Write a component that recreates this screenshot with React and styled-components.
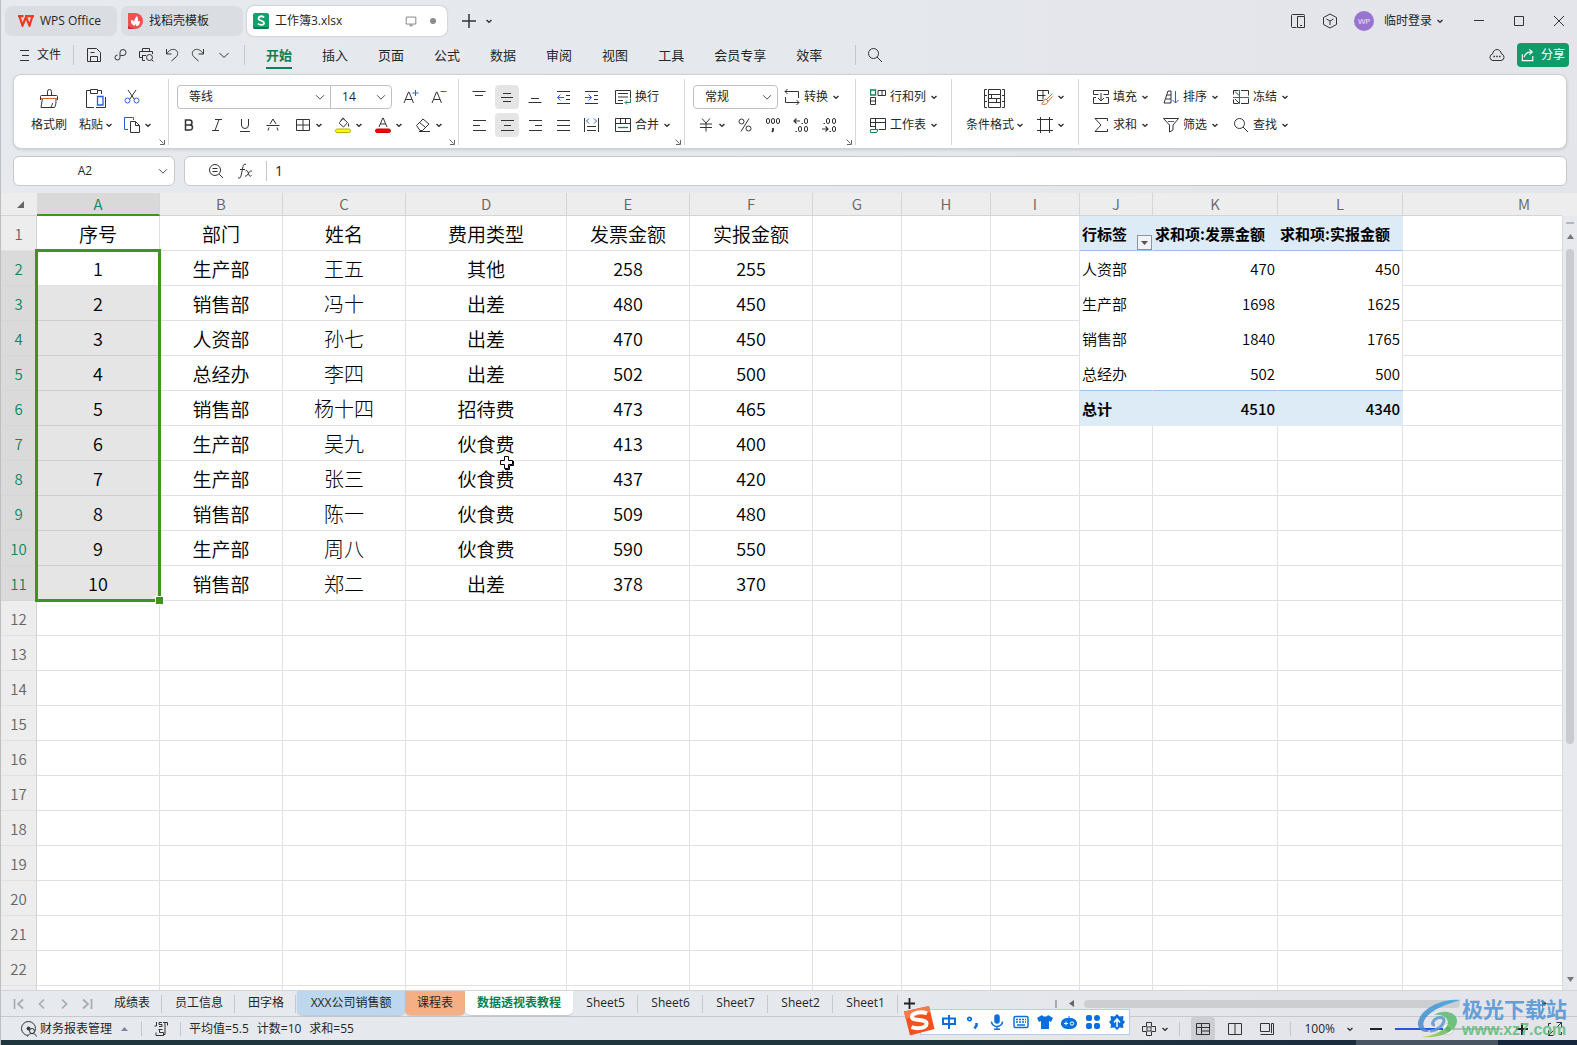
import { useState } from "react";
import styled, { createGlobalStyle, css } from "styled-components";

const ink = "#333";
const blue = "#2b5ce0";
const green = "#0f8558";
const orange = "#d9642c";

/* ---------- icons ---------- */

const paths = {
    burger: <path d="M2 3.5h9M4 8.5h7M2 13.5h9"/>,
    save: <path d="M1.5 1.5h9l4 4v9h-13zM4.5 14v-4.5h7V14M4.5 5.5h4"/>,
    link: <path d="M8.5 8.500h2.500a3 3 0 1 0-3-3v5a2.500 2.500 0 1 1-2.500-2.500"/>,
    print: <><path d="M4.5 4V1.5h7V4M4 10.5H1.500v-6h13V7M4.500 8.500H8M4.500 8v5.500H7"/><circle cx="11.500" cy="10.500" r="3"/><path d="M13.500 12.500l2 2"/></>,
    undo: <path d="M2.500 2v5h5M3 6.500C5 3 8 2 10.500 2.500c3.500 1 4 4.500 2 7L7.500 14"/>,
    redo: <path d="M13.500 2v5h-5M13 6.500C11 3 8 2 5.500 2.500c-3.500 1-4 4.500-2 7L8.500 14"/>,
    wide: <path d="M3.500 6l4.500 4.500L12.500 6"/>,
    search: <><circle cx="6.500" cy="6.500" r="5"/><path d="M10 10l5 5"/></>,
    panel: <path d="M6.500 14.500h-4a1 1 0 0 1-1-1v-11a1 1 0 0 1 1-1h11a1 1 0 0 1 1 1V3M7.500 3.500h7v11h-7zM10 12.500h2"/>,
    cube: <path d="M8 1l6.500 3.500v7L8 15l-6.500-3.500v-7zM4.500 6L8 8l3.500-2M8 8v4"/>,
    cloud: <><path d="M4 13.500a3.300 3.300 0 0 1-.5-6.500C4 4 6 2.500 8 2.500S12 4 12.500 7a3.300 3.300 0 0 1-.5 6.500z"/><path d="M4.500 9.500h1.500M7.200 9.500h1.500M10 9.500h1.500" strokeWidth="1.500"/></>,
    share: <path d="M1.500 7v7.500h12V9M3.500 10.500c1-4 4-6 9-6M9.500 1.500l3.500 3-3.500 3" stroke="#fff" strokeWidth="1.300"/>,
    min: <path d="M3 7.500h10"/>,
    max: <path d="M3.500 3.500h9v9h-9z"/>,
    close: <path d="M3 3l10 10M13 3L3 13"/>,
    plus: <path d="M8 1v14M1 8h14" strokeWidth="1.500"/>,
    screen: <path d="M2.500 3.500h11v8h-11zM6 13.500h4M8 11.500v2" stroke="#777"/>,
    zoomText: <><circle cx="7" cy="7" r="5.500"/><path d="M11 11l4 4M4.500 5.500h5M4.500 8.500h5"/></>,
    fx: <path d="M9 1.500C7.500.5 6.500 1.500 6 3.500L4 13c-.5 2-1.500 2.500-3 1.800M3 6.500h5M8.500 8c1-1 2-.5 2.500 1l1 3c.5 1.500 1.500 1.500 2.500.5M15 8c-2-.5-3 1.500-4 3s-1.500 2.500-3 2"/>,
    cut: <><path d="M4 1l6.500 9.500M12 1L5.500 10.500"/><g stroke={blue}><circle cx="3.500" cy="11.500" r="2.500"/><circle cx="12.500" cy="11.500" r="2.500"/></g></>,
    copy: <><path d="M4 12.500H.5v-12h9V3" stroke={blue}/><path d="M6.500 4.500h5l4 4v7h-9zM11.500 4.500v4h4"/></>,
    growFont: <><path d="M1 14L5.500 3h.5l4.500 11M2.500 10.500h6.500"/><path d="M12.500 1v6M9.500 4h6" stroke={blue}/></>,
    shrinkFont: <><path d="M1 14L5.500 3h.5l4.500 11M2.500 10.500h6.500"/><path d="M9.500 2.500h6" stroke={blue}/></>,
    bold: <path d="M4.500 3h4a2.300 2.300 0 0 1 0 5h-4zM4.500 8H9a2.500 2.500 0 0 1 0 5H4.500z" strokeWidth="1.500"/>,
    italic: <path d="M6 2.500h7M3 13.500h7M10 2.500l-4 11"/>,
    underline: <path d="M4.500 2v6a3.500 3.500 0 0 0 7 0V2M3 14.500h10"/>,
    strike: <path d="M1.500 8.500h13M5 7l3-5 3 5M4 10.500l-1 3M12 10.500l1 3"/>,
    borders: <path d="M1.500 2.500h13v11h-13zM8 2.500v11M1.500 8h13"/>,
    fill: <><path d="M4.500 5.500L8 1.500l4.500 4-4 4.500-4-3.500zM6 3.500C7 .5 9 .5 9.500 3M13.500 6.500v3"/><rect x=".5" y="12" width="15" height="3.500" rx="1.700" fill="#ffff00" stroke="#b5b000"/></>,
    fontColor: <><path d="M4 10L7.800 1h.4L12 10M5.500 7h5"/><rect x=".5" y="12" width="15" height="3.500" rx="1.700" fill="#ff0000" stroke="#c00000"/></>,
    eraser: <path d="M1.500 8.500l6.500-6.500 6 5-6.500 6.500H5zM4.500 5.500l6 5M4 14.500h11"/>,
    alignTop: <path d="M1.500 2.500h13M4 6.500h8"/>,
    alignMid: <path d="M4 4.500h8M2 8.500h12M4 12.500h8"/>,
    alignBot: <path d="M4 9.500h8M1.500 13.500h13"/>,
    outdent: <><path d="M2 2.500h13M2 14.500h13M11 6.500h4M11 10.500h4"/><path d="M2.500 8.500H9M5.500 5.500l-3 3 3 3" stroke={blue}/></>,
    indent: <><path d="M2 2.500h13M2 14.500h13M11 6.500h4M11 10.500h4"/><path d="M2 8.500h6.500M5.500 5.500l3 3-3 3" stroke={blue}/></>,
    left: <path d="M2 3.500h13M2 8.500h7M2 13.500h13"/>,
    center: <path d="M2 3.500h13M5 8.500h7M2 13.500h13"/>,
    right: <path d="M2 3.500h13M8 8.500h7M2 13.500h13"/>,
    justify: <path d="M2 3.500h13M2 8.500h13M2 13.500h13"/>,
    spread: <><path d="M1.500 1v14M15.500 1v14M4 9.500h9M4 13.500h9"/><path d="M6 1.500L3.500 4 6 6.500M11 1.500L13.500 4 11 6.500" stroke={blue}/></>,
    wrap: <><path d="M8 14.500H.5v-13h15V9M3 4.500h10M3 8h10M3 11.500h5"/><path d="M15.500 9.500v4h-5M12 11.500l-2 2 2 2" stroke={green}/></>,
    merge: <><path d="M.5 1.500h15v13H.5zM.5 6.500h15M5.500 1.500v5M10.500 1.500v5"/><path d="M3 10.500h10" stroke={green} strokeWidth="1.300"/></>,
    convert: <path d="M1 2.500h13.500V9M1.500 8v5.500H15M3.500 0L1 2.500 3.500 5M12.500 11l2.500 2.500L12.500 16"/>,
    yen: <path d="M4 1.500L8 6l4-4.500M2 7h12M2 10.500h12M8 6v8.500"/>,
    percent: <><circle cx="4.500" cy="4.500" r="2.500"/><circle cx="11.500" cy="11.500" r="2.500"/><path d="M12 1.500l-8 13"/></>,
    comma: <><rect x="1.500" y="1.500" width="3" height="5" rx="1.500"/><rect x="6.500" y="1.500" width="3" height="5" rx="1.500"/><rect x="11.500" y="1.500" width="3" height="5" rx="1.500"/><path d="M8 11v2.500l-1 1.500" strokeWidth="1.800"/></>,
    decMore: <><path d="M1 4h6M3.500 1.500L1 4l2.500 2.500M8.500 6.500h1.500M2.500 14.500H4" strokeWidth="1.200"/><rect x="11.500" y="1.500" width="3" height="5" rx="1.500"/><rect x="5.500" y="9.500" width="3" height="5" rx="1.500"/><rect x="11.500" y="9.500" width="3" height="5" rx="1.500"/></>,
    decLess: <><path d="M1 12h6M4.500 9.500L7 12l-2.500 2.500M2.500 6.500H4M8.500 14.500h1.500" strokeWidth="1.200"/><rect x="5.500" y="1.500" width="3" height="5" rx="1.500"/><rect x="11.500" y="1.500" width="3" height="5" rx="1.500"/><rect x="11.500" y="9.500" width="3" height="5" rx="1.500"/></>,
    rowsCols: <><path d="M8 1.500h7.500v5H8zM12 1.500v5M.5 8.500h5v7h-5zM.5 12h5"/><path d="M.5 1h5v5h-5z" stroke={green} strokeWidth="1.300"/></>,
    sheet: <><path d="M.5 10V1.500h15v11H9M.5 5.500h15M5.500 1.500v11M.5 9.500h5"/><path d="M.5 12.500H8l-1.500 3h-6z" stroke={green}/></>,
    paint: <><path d="M6 11.500H.5V1.500h11V5M.5 6.500h8M6 1.500v9"/><path d="M15.500 4.500l-6 6M15.500 7.500l-4.500 5M9 10c-3 .5-2 4-4.500 5 3 1 6.500 0 6.500-3z" stroke={orange}/></>,
    crop: <path d="M3.500 0v16M12.500 0v16M0 2.500h16M0 13.500h16"/>,
    fillDown: <path d="M5.500 5.500h-5v-4h15v4h-5M3 8.500H.5v6h15v-6H13M8 4v8M5 9l3 3 3-3"/>,
    sort: <><path d="M1 14L5 2h3v12zM4 6h4M3 10h5"/><path d="M12.500 2v12M9.500 11l3 3 3-3" stroke={blue}/></>,
    freeze: <><path d="M5.500 1.500h-5v4M.5 10.500v4h5M8 1.500h7.500v5M15.500 9.500v5H8M2 2.500l4 4M2 10l4 4"/><path d="M0 8.500h16M6.500 1v14" stroke={green}/></>,
    sum: <path d="M14.500 4V1.500H2l6 6.500-6 6.500h12.500V12"/>,
    filter: <><path d="M.5 1.500h15L10 8v5l-3.500 2V8z"/><path d="M5 4.500h6" stroke={green}/></>,
    js: <><path d="M3.500 1v4H1.500M9 1.500H6v2h3v2H6"/><path d="M10 1.500h4.500v3M12 1.500v12h-2M5.500 8.500h4M3 11.500v3h7.500v-3h-4v-3"/></>,
    macro: <><circle cx="7.500" cy="7.500" r="7"/><circle cx="7.500" cy="7.500" r="1.500" fill={ink}/><circle cx="11" cy="10" r="2.500" fill="#e6eaee"/><path d="M6.500 15.500c1-4 8-4 9 0" fill="#e6eaee"/></>,
    target: <path d="M5.500 5.500V1.500h5v4M5.500 10.500v4h5v-4M5.500 5.500h-4v5h4M10.500 5.500h4v5h-4M6 6h4v4H6z"/>,
    viewGrid: <path d="M1.500 2.500h13v11h-13zM1.500 6.500h13M6.500 2.500v11M6.500 10h8"/>,
    viewBook: <path d="M1.500 2.500h13v11h-13zM8 2.500v11"/>,
    viewPage: <path d="M1.500 2.500h9v8h-9zM12.500 2.500h2v11h-13M12.500 2.500v9.500"/>,
    full: <path d="M9.500 1.500h5v5M14.500 1.500L10 6M6.500 14.500h-5v-5M1.500 14.500L6 10M1.500 5V2.500H4M14.500 11v2.500H12"/>,
    first: <path d="M2.500 3v10M11 3.500L6 8l5 4.500" stroke="#a7abb0" strokeWidth="1.700"/>,
    prev: <path d="M10 3.500L5.500 8l4.500 4.500" stroke="#a7abb0" strokeWidth="1.700"/>,
    next: <path d="M6 3.500L10.500 8 6 12.500" stroke="#a7abb0" strokeWidth="1.700"/>,
    last: <path d="M13.500 3v10M5 3.500L10 8l-5 4.500" stroke="#a7abb0" strokeWidth="1.700"/>,
};

const big = {
    brush: <path d="M8.500 7V3.500a2 2 0 0 1 4 0V7M1.500 12V8.500a1 1 0 0 1 1-1h15a1 1 0 0 1 1 1V12M3.500 10L2 19.500h13.500c1.500-2 1.500-5 1.500-9M12 19c1-1.500 1.500-3 1.500-4"/>,
    paste: <><path d="M9 19.500H1.500v-17H5M13 2.500h3.500V6M5.500 1.500h7v4h-7zM11 19.500h9.500V9"/><path d="M12.500 8.500h5.500v8.500h-5.500z" stroke={blue} strokeWidth="1.300"/></>,
    cond: <path d="M4.500 1.500h12v18h-12zM4.500 6.500h12M4.500 10.500h12M4.500 14.500h12M7.500 6.500v4M12.500 10.500v4M3 1.500H.500v18H3M18 1.500h2.500v18H18M.5 7.500h2.500M.5 13.500h2.500M18 7.500h2.500M18 13.500h2.500"/>,
};

function Icon({ name, size = 16 }) {
    return (
        <svg width={size} height={size} viewBox="0 0 16 16" fill="none" stroke={ink} aria-hidden="true">
            {paths[name]}
        </svg>
    );
}

function BigIcon({ name }) {
    return (
        <svg width="21" height="21" viewBox="0 0 21 21" fill="none" stroke={ink} aria-hidden="true">
            {big[name]}
            {name === "brush" && <path d="M2 10.500h16" stroke={orange}/>}
        </svg>
    );
}

function Caret() {
    return (
        <svg width="6" height="6" viewBox="0 0 6 6" fill="none" stroke={ink} strokeWidth="1.400" aria-hidden="true">
            <path d="M.5 2L3 4.300 5.500 2"/>
        </svg>
    );
}

/* ---------- data ---------- */

const menus = ["插入", "页面", "公式", "数据", "审阅", "视图", "工具", "会员专享", "效率"];
const quick = [["save", "保存"], ["link", "输出"], ["print", "打印预览"], ["undo", "撤销"], ["redo", "恢复"], ["wide", "更多"]];
const columns = [
    ["A", 123], ["B", 123], ["C", 123], ["D", 161], ["E", 123], ["F", 123], ["G", 89],
    ["H", 89], ["I", 89], ["J", 73], ["K", 125], ["L", 125], ["M", null],
];
const header = ["序号", "部门", "姓名", "费用类型", "发票金额", "实报金额"];
const records = [
    [1, "生产部", "王五", "其他", 258, 255],
    [2, "销售部", "冯十", "出差", 480, 450],
    [3, "人资部", "孙七", "出差", 470, 450],
    [4, "总经办", "李四", "出差", 502, 500],
    [5, "销售部", "杨十四", "招待费", 473, 465],
    [6, "生产部", "吴九", "伙食费", 413, 400],
    [7, "生产部", "张三", "伙食费", 437, 420],
    [8, "销售部", "陈一", "伙食费", 509, 480],
    [9, "生产部", "周八", "伙食费", 590, 550],
    [10, "销售部", "郑二", "出差", 378, 370],
];
const rows = [header, ...records];
const rowCount = 22;
const pivot = [
    ["行标签", "求和项:发票金额", "求和项:实报金额"],
    ["人资部", 470, 450],
    ["生产部", 1698, 1625],
    ["销售部", 1840, 1765],
    ["总经办", 502, 500],
    ["总计", 4510, 4340],
];
const sheets = [
    { name: "成绩表" }, { name: "员工信息" }, { name: "田字格" },
    { name: "XXX公司销售额", color: "#bdd7ee", width: 108 }, { name: "课程表", color: "#f4b084" },
    { name: "数据透视表教程" },
    { name: "Sheet5", width: 65 }, { name: "Sheet6", width: 65 }, { name: "Sheet7", width: 65 },
    { name: "Sheet2", width: 65 }, { name: "Sheet1", width: 65 },
];

/* ---------- page ---------- */

export default function App() {
    const [sheet, setSheet] = useState("数据透视表教程");

    return (
        <>
            <GlobalStyle/>
            <Window>
                <TitleBar/>
                <MenuBar/>
                <Ribbon/>
                <FormulaRow/>
                <Grid/>
                <SheetBar sheet={sheet} setSheet={setSheet}/>
                <StatusBar/>
                <Desktop/>
                <InputMethod/>
                <Watermark/>
            </Window>
        </>
    );
}

function TitleBar() {
    return (
        <Title>
            <FileTab $width={112}>
                <svg width="16" height="12" viewBox="0 0 16 12" fill="none" stroke="#f5391f" strokeWidth="2.200">
                    <path d="M0 1.200h5.500M1.500 1.500l3 9L8 2l3.500 8.500 3-9.500M7 1.200h9"/>
                </svg>
                WPS Office
            </FileTab>
            <FileTab $width={122}>
                <svg width="16" height="16" viewBox="0 0 16 16">
                    <path d="M1 0h7a8 8 0 0 1 0 16H1z" fill="#f0504f"/>
                    <path d="M1 13l7 3H1z" fill="#c93237"/>
                    <path d="M8 13C3 11 4 8 4 7c3 0 4 3 4 6zM8 12C6 8 8 5 10 3c2 4 1 7-2 9zM9 13c0-4 2-5 4-5 0 3-1 5-4 5z" fill="#fff"/>
                </svg>
                找稻壳模板
            </FileTab>
            <FileTab $width={200} $active>
                <svg width="16" height="16" viewBox="0 0 16 16">
                    <rect width="16" height="16" rx="2" fill="#10a26c"/>
                    <path d="M0 14h16a2 2 0 0 1-2 2H2a2 2 0 0 1-2-2z" fill="#0b7a50"/>
                    <path d="M11 4.500C9.500 2.500 5.500 3 5.500 5.500c0 3 5.500 1.500 5.500 4.500 0 2.500-4.500 2.500-6 .5" fill="none" stroke="#fff" strokeWidth="1.800"/>
                </svg>
                <span>工作簿3.xlsx</span>
                <TabState><Icon name="screen" size={14}/><Dot/></TabState>
            </FileTab>
            <Row $gap={9}>
                <IconButton aria-label="新建"><Icon name="plus"/></IconButton>
                <Caret/>
            </Row>
            <Spacer/>
            <Account>
                <IconButton aria-label="侧栏"><Icon name="panel"/></IconButton>
                <IconButton aria-label="应用"><Icon name="cube"/></IconButton>
                <Login><Avatar>WP</Avatar>临时登录<Caret/></Login>
            </Account>
            <Row $gap={24}>
                <IconButton aria-label="最小化"><Icon name="min"/></IconButton>
                <IconButton aria-label="最大化"><Icon name="max"/></IconButton>
                <IconButton aria-label="关闭"><Icon name="close"/></IconButton>
            </Row>
        </Title>
    );
}

function MenuBar() {
    return (
        <Menu>
            <FileMenu><Icon name="burger"/>文件</FileMenu>
            <Divider/>
            <QuickTools>
                {quick.map(([name, label]) => (
                    <IconButton key={name} aria-label={label}><Icon name={name}/></IconButton>
                ))}
            </QuickTools>
            <Divider/>
            <MenuList>
                <MenuItem $active>开始</MenuItem>
                {menus.map((m) => <MenuItem key={m}>{m}</MenuItem>)}
            </MenuList>
            <Divider/>
            <Find aria-label="搜索"><Icon name="search"/></Find>
            <Spacer/>
            <IconButton aria-label="云端"><Icon name="cloud"/></IconButton>
            <ShareButton><Icon name="share" size={14}/>分享</ShareButton>
        </Menu>
    );
}

function Drop({ icon, children }) {
    return <DropTool aria-label={icon}><Icon name={icon}/>{children && <span>{children}</span>}<Caret/></DropTool>;
}

function Tools({ names, on }) {
    return (
        <Row $gap={4}>
            {names.map((n) => <Tool key={n} $on={n === on} aria-label={n}><Icon name={n}/></Tool>)}
        </Row>
    );
}

function Pick({ label, value, width, side }) {
    return (
        <PickBox $width={width} $side={side}>
            <select aria-label={label} defaultValue={value}><option>{value}</option></select>
            <Icon name="wide" size={14}/>
        </PickBox>
    );
}

function Launcher() {
    return (
        <Corner aria-label="更多设置">
            <svg width="6" height="6" viewBox="0 0 6 6" fill="none" stroke="#666"><path d="M.5.5l4 4M5.500 1v4.500H1"/></svg>
        </Corner>
    );
}

function Ribbon() {
    return (
        <RibbonPanel>
            <Group $left={17} $right={17} $gap={12}>
                <BigTool><BigIcon name="brush"/><span>格式刷</span></BigTool>
                <BigTool><BigIcon name="paste"/><span>粘贴<Caret/></span></BigTool>
                <Block>
                    <Row $h={24}><IconButton aria-label="剪切"><Icon name="cut"/></IconButton></Row>
                    <Drop icon="copy"/>
                </Block>
                <Launcher/>
            </Group>
            <Group $left={8} $right={7}>
                <Block>
                    <Row $gap={7}>
                        <Row>
                            <Pick label="字体" value="等线" width={153} side="left"/>
                            <Pick label="字号" value="14" width={62} side="right"/>
                        </Row>
                        <Tools names={["growFont", "shrinkFont"]}/>
                    </Row>
                    <Row $gap={10}>
                        <Tools names={["bold", "italic", "underline", "strike"]}/>
                        <Row $gap={13}>
                            <Drop icon="borders"/><Drop icon="fill"/><Drop icon="fontColor"/><Drop icon="eraser"/>
                        </Row>
                    </Row>
                </Block>
                <Launcher/>
            </Group>
            <Group $left={8} $right={14} $gap={12}>
                <Block>
                    <Tools names={["alignTop", "alignMid", "alignBot", "outdent", "indent"]} on="alignMid"/>
                    <Tools names={["left", "center", "right", "justify", "spread"]} on="center"/>
                </Block>
                <Block>
                    <DropTool><Icon name="wrap"/><span>换行</span></DropTool>
                    <Drop icon="merge">合并</Drop>
                </Block>
                <Launcher/>
            </Group>
            <Group $left={8} $right={14}>
                <Block>
                    <Row $gap={6}>
                        <Pick label="数字格式" value="常规" width={85}/>
                        <Drop icon="convert">转换</Drop>
                    </Row>
                    <Row $gap={8} $indent={5}>
                        <Drop icon="yen"/>
                        <Tools names={["percent", "comma", "decMore", "decLess"]}/>
                    </Row>
                </Block>
                <Launcher/>
            </Group>
            <Group $left={14} $right={14}>
                <Block>
                    <Drop icon="rowsCols">行和列</Drop>
                    <Drop icon="sheet">工作表</Drop>
                </Block>
            </Group>
            <Group $left={14} $right={14} $gap={14}>
                <BigTool><BigIcon name="cond"/><span>条件格式<Caret/></span></BigTool>
                <Block>
                    <Drop icon="paint"/>
                    <Drop icon="crop"/>
                </Block>
            </Group>
            <Group $left={14} $right={14} $last>
                <Block>
                    <Row $gap={15}>
                        <Drop icon="fillDown">填充</Drop><Drop icon="sort">排序</Drop><Drop icon="freeze">冻结</Drop>
                    </Row>
                    <Row $gap={15}>
                        <Drop icon="sum">求和</Drop><Drop icon="filter">筛选</Drop><Drop icon="search">查找</Drop>
                    </Row>
                </Block>
            </Group>
        </RibbonPanel>
    );
}

function FormulaRow() {
    return (
        <Formula>
            <NameBox>
                <input aria-label="名称框" defaultValue="A2"/>
                <Icon name="wide" size={14}/>
            </NameBox>
            <FormulaBox>
                <Icon name="zoomText"/>
                <Icon name="fx"/>
                <Divider/>
                <input aria-label="编辑栏" defaultValue="1"/>
            </FormulaBox>
        </Formula>
    );
}

function cellFor(r, c) {
    const value = rows[r]?.[c];
    if (c < 6) return <Cell key={c} $name={r > 0 && c === 2} $num={typeof value === "number"} $picked={c === 0 && r > 1 && r < 11}>{value}</Cell>;
    if (c > 8 && c < 12 && r < 6) {
        const p = pivot[r][c - 9];
        return (
            <PivotCell key={c} $band={r === 0 || r === 5} $rule={r === 0 || r === 4} $edge={c === 11} $num={typeof p === "number"}>
                {p}
                {r === 0 && c === 9 && (
                    <FilterButton aria-label="筛选行标签">
                        <svg width="7" height="4" viewBox="0 0 7 4"><path d="M0 0h7L3.500 4z" fill="#555"/></svg>
                    </FilterButton>
                )}
            </PivotCell>
        );
    }
    return <Cell key={c}/>;
}

function Grid() {
    return (
        <GridArea>
            <Viewport>
                <Sheet>
                    <colgroup>
                        <Col $w={36}/>
                        {columns.map(([name, w]) => <Col key={name} $w={w}/>)}
                    </colgroup>
                    <thead>
                        <tr>
                            <ColHead aria-label="全选">
                                <AllCorner width="7" height="7" viewBox="0 0 7 7"><path d="M7 0v7H0z" fill="#666"/></AllCorner>
                            </ColHead>
                            {columns.map(([name]) => <ColHead key={name} $on={name === "A"}>{name}</ColHead>)}
                        </tr>
                    </thead>
                    <tbody>
                        {Array.from({ length: rowCount + 1 }, (_, r) => (
                            <tr key={r}>
                                <RowHead $on={r > 0 && r < 11}>{r < rowCount && r + 1}</RowHead>
                                {columns.map((_c, c) => cellFor(r, c))}
                            </tr>
                        ))}
                    </tbody>
                </Sheet>
                <Selection/>
                <Pointer width="16" height="16" viewBox="0 0 16 16">
                    <path d="M5.500 1.500h4v4h4v4h-4v4h-4v-4h-4v-4h4z" fill="#fff" stroke="#000"/>
                    <path d="M6 14.500h4.500V10.500M11 10.500h3.500V6" fill="none" stroke="#000"/>
                </Pointer>
            </Viewport>
            <VScroll>
                <Dash/>
                <svg width="7" height="5" viewBox="0 0 7 5"><path d="M0 5h7L3.500 0z" fill="#777"/></svg>
                <VTrack><VThumb/></VTrack>
                <svg width="7" height="5" viewBox="0 0 7 5"><path d="M0 0h7L3.500 5z" fill="#777"/></svg>
            </VScroll>
        </GridArea>
    );
}

function SheetBar({ sheet, setSheet }) {
    return (
        <Sheets>
            <SheetNav>
                {["first", "prev", "next", "last"].map((n) => (
                    <IconButton key={n} aria-label={n}><Icon name={n}/></IconButton>
                ))}
            </SheetNav>
            {sheets.map((s) => (
                <SheetTab key={s.name} $color={s.color} $width={s.width} $active={s.name === sheet} onClick={() => setSheet(s.name)}>{s.name}</SheetTab>
            ))}
            <AddSheet aria-label="新建工作表">
                <svg width="11" height="11" viewBox="0 0 11 11" stroke="#222" strokeWidth="1.800"><path d="M5.500 0v11M0 5.500h11"/></svg>
            </AddSheet>
            <Spacer/>
            <HScroll>
                <Splitter/>
                <svg width="5" height="7" viewBox="0 0 5 7"><path d="M5 0v7L0 3.500z" fill="#666"/></svg>
                <HTrack><HThumb/></HTrack>
                <svg width="5" height="7" viewBox="0 0 5 7"><path d="M0 0v7l5-3.500z" fill="#444"/></svg>
            </HScroll>
        </Sheets>
    );
}

function StatusBar() {
    return (
        <Status>
            <Macro><Icon name="macro"/>财务报表管理
                <svg width="7" height="4" viewBox="0 0 7 4"><path d="M0 4h7L3.500 0z" fill="#7b86a5"/></svg>
            </Macro>
            <Divider $short/>
            <IconButton aria-label="JS 宏"><Icon name="js"/></IconButton>
            <Divider $short/>
            <Stats><span>平均值=5.5</span><span>计数=10</span><span>求和=55</span></Stats>
            <Spacer/>
            <DropTool aria-label="阅读模式"><Icon name="target"/><Caret/></DropTool>
            <Divider $short/>
            <Row $gap={8}>
                <Tool $on aria-label="普通视图"><Icon name="viewGrid"/></Tool>
                <Tool aria-label="分页预览"><Icon name="viewBook"/></Tool>
                <Tool aria-label="页面布局"><Icon name="viewPage"/></Tool>
            </Row>
            <Divider $short/>
            <ZoomLevel>100%<Caret/></ZoomLevel>
            <Zoom>
                <IconButton aria-label="缩小"><svg width="12" height="12" viewBox="0 0 12 12" stroke="#222" strokeWidth="2"><path d="M0 6h12"/></svg></IconButton>
                <input type="range" aria-label="缩放" defaultValue="49"/>
                <IconButton aria-label="放大"><svg width="12" height="12" viewBox="0 0 12 12" stroke="#222" strokeWidth="2"><path d="M0 6h12M6 0v12"/></svg></IconButton>
            </Zoom>
            <IconButton aria-label="全屏"><Icon name="full"/></IconButton>
        </Status>
    );
}

function InputMethod() {
    const b = "#0b6fdb";
    return (
        <Ime>
            <ImeLogo width="32" height="32" viewBox="0 0 32 32">
                <path d="M1 6.500L26 1l5.500 23L7 30.500z" fill="#f4511e"/>
                <path d="M1 6.500L26 1l1.500 6L2.500 14z" fill="#fa7a4a"/>
                <path d="M24 8.500c-6-2.500-15-1-15 3.500 0 4.500 14.500 1.500 14.500 6.500 0 4.500-9 6-15 3.500" fill="none" stroke="#fff" strokeWidth="4"/>
            </ImeLogo>
            <svg width="16" height="16" viewBox="0 0 16 16" fill="none" stroke={b} strokeWidth="2"><path d="M2 4.500h12v5.500H2zM8 1v14"/></svg>
            <svg width="16" height="16" viewBox="0 0 16 16" fill="none" stroke={b} strokeWidth="1.700"><circle cx="4.500" cy="5" r="1.700"/><path d="M11.500 9v2.500l-2 3" strokeWidth="2.500"/></svg>
            <svg width="16" height="16" viewBox="0 0 16 16" fill="none" stroke={b} strokeWidth="1.500"><rect x="6" y="1" width="4" height="8" rx="2" fill={b}/><path d="M2.500 7.500a5.500 5 0 0 0 11 0M8 12.500V15M5 15.200h6"/></svg>
            <svg width="16" height="16" viewBox="0 0 16 16" fill="none" stroke={b} strokeWidth="1.500"><rect x="1" y="2.500" width="14" height="11" rx="1.500"/><path d="M3 5.500h10M3 8h10" strokeDasharray="2 1"/><path d="M4 11h8"/></svg>
            <svg width="16" height="16" viewBox="0 0 16 16" fill={b}><path d="M5 1c1 2 5 2 6 0l5 3-2 4-2-1v8H4V7L2 8 0 4z"/></svg>
            <svg width="16" height="16" viewBox="0 0 16 16" fill={b}><path d="M7.500 2h1v2C13 4 16 6 16 9.500S13 15 8 15 0 13 0 9.500 3 4 7.500 4z"/><path d="M3 9.500h4M5 7.500v4" stroke="#fff"/><circle cx="11" cy="9.500" r="1.700" fill="none" stroke="#fff"/></svg>
            <svg width="16" height="16" viewBox="0 0 16 16" fill={b}><rect x="1" y="1" width="6" height="6" rx="2"/><rect x="9" y="1" width="6" height="6" rx="3"/><rect x="1" y="9" width="6" height="6" rx="2"/><rect x="9" y="9" width="6" height="6" rx="2"/></svg>
            <svg width="16" height="16" viewBox="0 0 16 16" fill={b}><path d="M8 0l2.500 2.500 4-.5-.5 4L16 8l-2 2.500.5 3.500-4-.5L8 16l-2.500-2.500-4 .5.5-3.500L0 8l2-2-.5-4 4 .5z"/><path d="M8 13V6M5 8.500L8 5l3 3.500" stroke="#fff" strokeWidth="1.500" fill="none"/></svg>
        </Ime>
    );
}

function Watermark() {
    return (
        <Mark>
            <svg width="46" height="42" viewBox="0 0 46 42">
                <defs>
                    <linearGradient id="swirlTop" x1="0" y1="1" x2="1" y2="0"><stop offset="0" stopColor="#4a86c8"/><stop offset="1" stopColor="#3aa8e0"/></linearGradient>
                    <linearGradient id="swirlLow" x1="0" y1="1" x2="1" y2="0"><stop offset="0" stopColor="#c4cf45"/><stop offset=".5" stopColor="#5cba62"/><stop offset="1" stopColor="#58bd7a"/></linearGradient>
                </defs>
                <path d="M45 2C27 0 5 10 2 24c-1 7 5 12 12 9-5-1-8-5-6-10C12 13 30 6 45 2z" fill="url(#swirlTop)"/>
                <path d="M18 17c9-6 22-3 23 5 1 10-15 19-36 17 12-1 26-7 27-14 0-6-7-9-14-8z" fill="url(#swirlLow)"/>
                <path d="M14 33c7 0 14-6 14-11-1-4-9-3-11 2-1 2 0 3 2 3" fill="none" stroke="#5a9bd0" strokeWidth="3"/>
            </svg>
            <div><strong>极光下载站</strong><em>www.xz7.com</em></div>
        </Mark>
    );
}

/* ---------- styles ---------- */

const GlobalStyle = createGlobalStyle`
    * {
        box-sizing: border-box;
    }
    body {
        margin: 0;
        font: 12px/16px "Open Sans", "Noto Sans CJK SC", sans-serif;
        color: #262626;
    }
    button, input, select {
        font: inherit;
        color: inherit;
        background: none;
        border: 0;
        padding: 0;
        outline: 0;
    }
    svg {
        display: block;
        flex: none;
    }
`

const Window = styled.div`
    position: relative;
    display: flex;
    flex-direction: column;
    height: 100vh;
    overflow: hidden;
    border-left: 1px solid #bfbfc1;
    background: linear-gradient(90deg, #e6eaee, #e5e9ed 50%, #e4e5ea 80%);
`

const Spacer = styled.div`
    flex: 1;
`

const Row = styled.div`
    display: flex;
    align-items: center;
    gap: ${(p) => p.$gap || 0}px;
    padding-left: ${(p) => p.$indent || 0}px;
    height: ${(p) => (p.$h ? p.$h + "px" : "auto")};
`

const IconButton = styled.button`
    display: flex;
    align-items: center;
    justify-content: center;
`

const Divider = styled.span`
    width: 1px;
    height: ${(p) => (p.$short ? 14 : 20)}px;
    background: #c3c7cb;
`

const Title = styled.header`
    display: flex;
    align-items: center;
    height: 40px;
    padding: 2px 10px 0 4px;
    gap: 4px;
`

const FileTab = styled.button`
    display: flex;
    align-items: center;
    gap: 6px;
    width: ${(p) => p.$width}px;
    height: 30px;
    padding: 0 11px 0 6px;
    border-radius: 7px;
    background: ${(p) => (p.$active ? "#fff" : "#dadde1")};
    box-shadow: ${(p) => (p.$active ? "0 0 2px rgba(0, 0, 0, .3)" : "none")};
    margin-right: ${(p) => (p.$active ? 10 : 0)}px;
    &:first-child {
        padding-left: 13px;
    }
`

const TabState = styled.span`
    display: flex;
    align-items: center;
    gap: 12px;
    margin-left: auto;
`

const Dot = styled.i`
    width: 6px;
    height: 6px;
    border-radius: 50%;
    background: #8c8c8c;
`

const Account = styled.div`
    display: flex;
    align-items: center;
    gap: 16px;
    margin-right: 24px;
`

const Login = styled.button`
    display: flex;
    align-items: center;
    gap: 5px;
`

const Avatar = styled.span`
    width: 20px;
    margin-right: 5px;
    border-radius: 50%;
    background: #9873d0;
    color: #eee;
    font-size: 8px;
    line-height: 20px;
`

const Menu = styled.nav`
    display: flex;
    align-items: center;
    height: 34px;
    padding: 0 8px 4px 17px;
`

const FileMenu = styled.button`
    display: flex;
    align-items: center;
    gap: 3px;
    margin-right: 12px;
`

const QuickTools = styled.div`
    display: flex;
    gap: 10px;
    padding: 0 12px;
`

const MenuList = styled.div`
    display: flex;
    gap: 30px;
    align-self: stretch;
    padding: 0 33px 0 21px;
`

const MenuItem = styled.button`
    height: 29px;
    padding-top: 2px;
    font-size: 13px;
    border-bottom: 2px solid ${(p) => (p.$active ? "#0b7f55" : "transparent")};
    color: ${(p) => (p.$active ? "#0b7f55" : "inherit")};
    font-weight: ${(p) => (p.$active ? 700 : 400)};
`

const Find = styled(IconButton)`
    margin-left: 11px;
`

const ShareButton = styled.button`
    display: flex;
    align-items: center;
    justify-content: center;
    gap: 6px;
    width: 52px;
    height: 24px;
    margin-left: 12px;
    border-radius: 4px;
    background: #109b68;
    color: #fff;
`

const RibbonPanel = styled.section`
    display: flex;
    height: 75px;
    padding: 4px 0 3px;
    margin: 0 10px 0 12px;
    border: 1px solid #cdd0d4;
    border-radius: 8px;
    background: #fff;
    box-shadow: 0 1px 3px rgba(0, 0, 0, .12);
`

const Group = styled.div`
    position: relative;
    display: flex;
    align-items: flex-start;
    gap: ${(p) => p.$gap || 0}px;
    padding: 6px ${(p) => p.$right}px 0 ${(p) => p.$left}px;
    border-right: ${(p) => (p.$last ? 0 : 1)}px solid #d6d8da;
`

const Block = styled.div`
    display: flex;
    flex-direction: column;
    gap: 4px;
`

const Tool = styled.button`
    display: flex;
    align-items: center;
    justify-content: center;
    width: 24px;
    height: 24px;
    border-radius: 4px;
    background: ${(p) => (p.$on ? "rgba(0, 0, 0, .1)" : "none")};
`

const DropTool = styled.button`
    display: flex;
    align-items: center;
    gap: 5px;
    height: 24px;
    white-space: nowrap;
    span {
        margin-left: -1px;
    }
`

const BigTool = styled.button`
    display: flex;
    flex-direction: column;
    align-items: center;
    justify-content: space-between;
    height: 52px;
    padding: 3px 0 4px;
    white-space: nowrap;
    span {
        display: flex;
        align-items: center;
        gap: 3px;
    }
`

const Corner = styled.button`
    position: absolute;
    right: 3px;
    bottom: 0;
`

const sides = {
    left: css`border-radius: 4px 0 0 4px; border-right: 0;`,
    right: css`border-radius: 0 4px 4px 0;`,
}

const PickBox = styled.div`
    display: flex;
    align-items: center;
    width: ${(p) => p.$width}px;
    height: 24px;
    padding: 0 3px 0 11px;
    border: 1px solid #bfc1c3;
    border-radius: 4px;
    ${(p) => sides[p.$side]}
    select {
        flex: 1;
        appearance: none;
    }
    svg {
        pointer-events: none;
        margin-left: -14px;
    }
`

const Formula = styled.section`
    display: flex;
    gap: 9px;
    margin: 7px 10px 7px 12px;
    height: 30px;
`

const NameBox = styled.div`
    display: flex;
    align-items: center;
    width: 162px;
    padding-right: 4px;
    border: 1px solid #c6c8cb;
    border-radius: 6px;
    background: #fff;
    input {
        flex: 1;
        min-width: 0;
        text-align: center;
    }
`

const FormulaBox = styled.div`
    display: flex;
    align-items: center;
    flex: 1;
    gap: 13px;
    padding-left: 23px;
    border: 1px solid #c6c8cb;
    border-radius: 6px;
    background: #fff;
    input {
        flex: 1;
        margin-left: -5px;
        font-size: 14px;
    }
`

const GridArea = styled.main`
    display: flex;
    flex: 1;
    min-height: 0;
    background: #ededed;
`

const Viewport = styled.div`
    position: relative;
    flex: 1;
    overflow: hidden;
`

const Sheet = styled.table`
    width: calc(100% + 84px);
    table-layout: fixed;
    border-collapse: separate;
    border-spacing: 0;
    background: #fff;
    font-family: "Noto Sans CJK SC", sans-serif;
`

const Col = styled.col`
    width: ${(p) => (p.$w ? p.$w + "px" : "auto")};
`

const ColHead = styled.th`
    height: 23px;
    padding: 0;
    border-right: 1px solid #d6d6d6;
    border-bottom: 1px solid #d4d4d4;
    background: #ededed;
    color: #666;
    font-size: 15px;
    font-weight: 350;
    line-height: 20px;
    ${(p) => p.$on && css`
        background: #d9d9d9;
        border-bottom: 2px solid #3f931f;
        color: #10855a;
    `}
    &:first-child {
        padding-left: 4px;
        border-right-color: #ededed;
    }
`

const AllCorner = styled.svg`
    margin: 0 auto;
`

const RowHead = styled.th`
    height: 35px;
    padding: 2px 0 0;
    border-right: 1px solid ${(p) => (p.$on ? "#dadada" : "#d4d4d4")};
    border-bottom: 1px solid ${(p) => (p.$on ? "#d6d6d6" : "#e0e0e0")};
    background: ${(p) => (p.$on ? "#dadada" : "#ededed")};
    color: ${(p) => (p.$on ? "#10855a" : "#666")};
    font-size: 15px;
    font-weight: 350;
`

const Cell = styled.td`
    height: 35px;
    padding: ${(p) => (p.$num ? 0 : 2)}px 0 0;
    border-right: 1px solid #e1e1e1;
    border-bottom: 1px solid ${(p) => (p.$picked ? "#cdcdcd" : "#e1e1e1")};
    background: ${(p) => (p.$picked ? "#e5e5e5" : "#fff")};
    color: #000;
    font-size: ${(p) => (p.$name ? 20 : p.$num ? 18 : 19)}px;
    font-weight: ${(p) => (p.$name ? 300 : 350)};
    line-height: 24px;
    text-align: center;
    white-space: nowrap;
`

const PivotCell = styled.td`
    position: relative;
    height: 35px;
    padding: 2px 2px 0;
    border-right: 1px solid ${(p) => (p.$edge && !p.$band ? "#e1e1e1" : "transparent")};
    border-bottom: 1px solid ${(p) => (p.$rule ? "#9bc2e6" : "transparent")};
    background: ${(p) => (p.$band ? "#ddebf7" : "#fff")};
    color: #000;
    font-size: 15px;
    font-weight: ${(p) => (p.$band ? (p.$num ? 500 : 700) : 350)};
    line-height: 20px;
    text-align: ${(p) => (p.$num ? "right" : "left")};
    white-space: nowrap;
`

const FilterButton = styled.button`
    position: absolute;
    right: 0;
    bottom: 0;
    display: flex;
    align-items: center;
    justify-content: center;
    width: 15px;
    height: 15px;
    border: 1px solid #8f93a3;
    background: #f0f2f6;
`

const Selection = styled.div`
    position: absolute;
    left: 34px;
    top: 56px;
    width: 126px;
    height: 353px;
    border: 3px solid #3f931f;
    &::after {
        content: "";
        position: absolute;
        right: -6px;
        bottom: -6px;
        width: 7px;
        height: 7px;
        border: 1px solid #fff;
        background: #3f931f;
    }
`

const Pointer = styled.svg`
    position: absolute;
    left: 498px;
    top: 262px;
`

const VScroll = styled.div`
    display: flex;
    flex-direction: column;
    align-items: center;
    gap: 10px;
    width: 15px;
    margin-top: 23px;
    padding: 6px 0 8px;
    background: #e8e9ee;
    border-left: 1px solid #d9dadd;
`

const Dash = styled.i`
    width: 8px;
    height: 2px;
    background: #b5b7bb;
`

const VTrack = styled.div`
    flex: 1;
    width: 8px;
`

const VThumb = styled.div`
    height: 69%;
    border-radius: 4px;
    background: #cacbd0;
`

const Sheets = styled.div`
    display: flex;
    height: 26px;
    border-top: 1px solid #d3d5d8;
    padding-right: 30px;
`

const SheetNav = styled.div`
    display: flex;
    gap: 6px;
    width: 101px;
    padding-left: 11px;
`

const SheetTab = styled.button`
    position: relative;
    height: 24px;
    min-width: ${(p) => p.$width || 0}px;
    padding: 0 12px;
    white-space: nowrap;
    border-radius: 0 0 5px 5px;
    background: ${(p) => (p.$active ? "#fff" : p.$color || "none")};
    color: ${(p) => (p.$active ? "#0b7f55" : "inherit")};
    font-weight: ${(p) => (p.$active ? 700 : 400)};
    ${(p) => (p.$active || p.$color) ? css`
        box-shadow: 0 1px 1px rgba(0, 0, 0, .15);
    ` : css`
        margin-right: 1px;
        &::after {
            content: "";
            position: absolute;
            right: 0;
            top: 4px;
            height: 18px;
            border-right: 1px solid #c6c9cc;
        }
    `}
    ${(p) => p.$width && css`
        margin-right: 0;
    `}
`

const AddSheet = styled(IconButton)`
    margin-left: 6px;
`

const HScroll = styled.div`
    display: flex;
    align-items: center;
    gap: 10px;
    width: 33%;
    max-width: 492px;
    flex: none;
`

const Splitter = styled.i`
    width: 2px;
    height: 8px;
    margin-right: 2px;
    background: #aaa;
`

const HTrack = styled.div`
    flex: 1;
    height: 8px;
`

const HThumb = styled.div`
    width: 84%;
    height: 8px;
    border-radius: 4px;
    background: #cdced1;
`

const Status = styled.footer`
    display: flex;
    align-items: center;
    height: 24px;
    padding: 0 14px 0 20px;
    border-top: 1px solid #c5c8cc;
    > ${Divider} {
        margin: 0 11px;
    }
    ${Tool} {
        border-radius: 3px;
    }
`

const Macro = styled.button`
    display: flex;
    align-items: center;
    gap: 3px;
    svg:last-child {
        margin: 0 2px 0 6px;
    }
`

const Stats = styled.div`
    display: flex;
    gap: 8px;
    margin-left: -3px;
`

const ZoomLevel = styled.button`
    display: flex;
    align-items: center;
    gap: 12px;
    margin: 0 17px 0 2px;
`

const Zoom = styled.div`
    display: flex;
    align-items: center;
    gap: 13px;
    margin-right: 19px;
    input {
        width: 108px;
        height: 10px;
        margin: 0;
        appearance: none;
        background: linear-gradient(90deg, #2257e6 50%, #b9bbbf 50%) center / 100% 2px no-repeat;
    }
    input::-webkit-slider-thumb {
        appearance: none;
        width: 10px;
        height: 10px;
        border-radius: 50%;
        background: radial-gradient(#888 2px, #fff 3px);
        box-shadow: 0 0 2px rgba(0, 0, 0, .4);
    }
`

const Desktop = styled.div`
    flex: none;
    height: 5px;
    margin-left: -1px;
    background: linear-gradient(90deg, #20363f 60%, #1b2c3f 86%, #4a5563 86%, #4a5563 95%, #16273d 95%);
`

const Ime = styled.div`
    position: absolute;
    right: 447px;
    bottom: 10px;
    display: flex;
    align-items: center;
    gap: 8px;
    width: 210px;
    height: 26px;
    padding-left: 20px;
    border: 1px solid #b7cbea;
    background: #fff;
`

const ImeLogo = styled.svg`
    position: absolute;
    left: -18px;
    top: -5px;
`

const Mark = styled.div`
    position: absolute;
    right: 10px;
    bottom: 4px;
    display: flex;
    align-items: center;
    opacity: .85;
    pointer-events: none;
    strong, em {
        display: block;
        font: 700 21px/22px "Noto Sans CJK SC", sans-serif;
        color: #4f93d3;
    }
    em {
        font: 700 16px/22px "Liberation Sans", sans-serif;
        color: #5dbb78;
    }
`
